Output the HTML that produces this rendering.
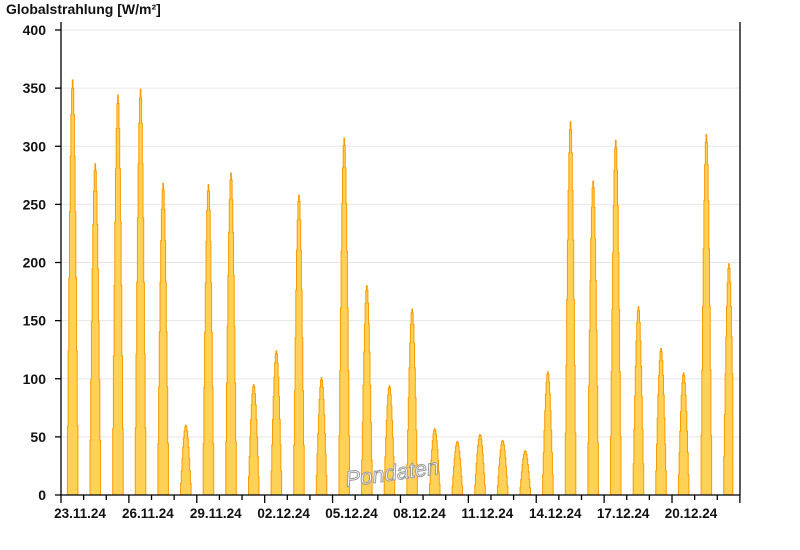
<!DOCTYPE html><html><head><style>body{margin:0;background:#fff}svg{display:block;font-family:"Liberation Sans",sans-serif}</style></head><body>
<svg id="s" width="800" height="550" xmlns="http://www.w3.org/2000/svg">
<text x="6" y="14" font-size="14" font-weight="bold" fill="#111">Globalstrahlung [W/m²]</text>
<g id="grid" stroke="#e6e6e6" stroke-width="1"></g>
<g id="bars"></g>
<text x="345" y="480" font-size="22" fill="#fff" stroke="#999" stroke-width="1" font-style="italic" transform="rotate(-8 395 472)">Pondaten</text>
<g id="ax" stroke="#000" stroke-width="1.3"></g>
<g id="lab" font-size="14" font-weight="bold" fill="#111"></g>
</svg>
<script>
var ns="http://www.w3.org/2000/svg";
function el(p,t,a,txt){var e=document.createElementNS(ns,t);for(var k in a)e.setAttribute(k,a[k]);if(txt)e.textContent=txt;document.getElementById(p).appendChild(e);}
var X0=61,DX=22.63,Y0=495,K=465/400;
for(var v=0;v<=400;v+=50){var y=Y0-v*K;if(v>0)el("grid","line",{x1:61,x2:740,y1:y,y2:y});
el("lab","text",{x:46,y:y+5,"text-anchor":"end"},String(v));el("ax","line",{x1:55,x2:61,y1:y,y2:y});}
var peaks=[357,285,344,349,268,60,267,277,95,124,258,101,307,180,94,160,57,46,52,47,38,106,321,270,305,162,126,105,310,199];
peaks.forEach(function(p,i){var c=X0+DX*(i+0.5),pts=[],hw=5.6;
 pts.push((c-hw)+","+Y0);
 for(var s=-8;s<=8;s++){var t=s/8,x=c+t*hw,val=p*Math.pow(Math.cos(t*Math.PI/2),1.1);
  if(i==29&&x>732.5)break;
  var y=Y0-val*K;pts.push(x.toFixed(1)+","+y.toFixed(1));pts.push((x+hw/8).toFixed(1)+","+y.toFixed(1));}
 var last=pts[pts.length-1].split(",")[0];pts.push(last+","+Y0);
 el("bars","polygon",{points:pts.join(" "),fill:"#ffd257",stroke:"#f99a00","stroke-width":"1"});});
el("ax","line",{x1:61,x2:61,y1:22,y2:495});el("ax","line",{x1:740,x2:740,y1:22,y2:495});
el("ax","line",{x1:61,x2:740,y1:495,y2:495});
var L=["23.11.24","26.11.24","29.11.24","02.12.24","05.12.24","08.12.24","11.12.24","14.12.24","17.12.24","20.12.24"];
for(var d=0;d<=30;d++){var x=X0+DX*d;el("ax","line",{x1:x,x2:x,y1:495,y2:d%3==0?503:500});
 if(d%3==0&&d/3<L.length)el("lab","text",{x:x+19,y:518,"text-anchor":"middle","font-size":"13.5"},L[d/3]);}
</script></body></html>
